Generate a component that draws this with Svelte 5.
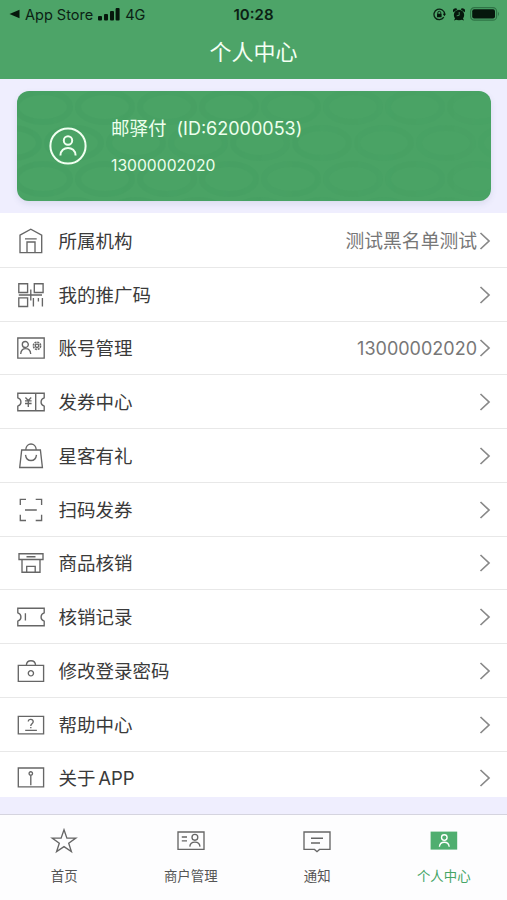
<script>
	const user = {
		name: '邮驿付',
		id: '62000053',
		phone: '13000002020'
	}

	const menu = [
		{ icon: 'house', label: '所属机构', value: '测试黑名单测试' },
		{ icon: 'qrcode', label: '我的推广码' },
		{ icon: 'account', label: '账号管理', value: '13000002020', number: true },
		{ icon: 'coupon', label: '发券中心' },
		{ icon: 'bag', label: '星客有礼' },
		{ icon: 'scan', label: '扫码发券' },
		{ icon: 'shop', label: '商品核销' },
		{ icon: 'ticket', label: '核销记录' },
		{ icon: 'lock', label: '修改登录密码' },
		{ icon: 'help', label: '帮助中心' },
		{ icon: 'about', label: '关于 APP' }
	]

	const icons = {
		house: 'M3 8.2L13.8 2.2L24.7 8.2V25.6H3ZM8 11.8H19.7M10 25.6V15H18V25.6',
		qrcode: 'M1.8 2.7H10.6V11.5H1.8ZM17.3 2.7H26.1V11.5H17.3ZM1.8 16.8H10.6V25.5H1.8ZM1.8 14H25M13.8 8.5V19.5M16.4 17V25.5M21.4 17V20.5M25.4 17V25.5',
		account: 'M.8 4H27.2V24.1H.8ZM3.7 20C4.2 12.9 13.2 12.9 13.7 20M11.3 10.5A3 3 0 1 1 5.3 10.5A3 3 0 1 1 11.3 10.5',
		coupon: 'M.8 5.2H27.2V9.8C23 11.2 23 16.8 27.2 18.2V22.7H.8V18.2C5 16.8 5 11.2 .8 9.8ZM18.7 5.2V22.7M8.4 9.5L11.3 12.5L14.2 9.5M8 12.8H14.6M8 15.5H14.6M11.3 12.5V19',
		bag: 'M4.7 8H23.4L25.4 25.5H2.7ZM8.7 8C9.2 0 18.8 0 19.3 8M8.5 12.8C9.5 20.4 18.5 20.4 19.5 12.8',
		scan: 'M9 3.3H3.3V9M18.7 3.3H24.6V9M24.6 18.7V24.5H18.7M9 24.5H3.3V18.7M8 14H19.8',
		shop: 'M2 4.7H26V10.5H2ZM5 10.5V23.2H23V10.5M9.7 23.2V17.3H18.2V23.2M9.5 7.7H18.5',
		ticket: 'M.8 5.2H27.2V9.8C23 11.2 23 16.8 27.2 18.2V22.7H.8V18.2C5 16.8 5 11.2 .8 9.8ZM8.4 10.3V17.5',
		lock: 'M1.3 8.4H26.6V24.3H1.3ZM9.3 8.4C9.7 2.2 18.2 2.2 18.6 8.4M16.5 16.3A2.6 2.6 0 1 1 11.3 16.3A2.6 2.6 0 1 1 16.5 16.3',
		help: 'M1.3 5.4H26.6V22.9H1.3ZM11.3 10.4C11.3 7.4 16.4 7.7 16.2 10.8C16 12.9 13.8 12.8 13.8 15M13.8 16V17.2M8.2 19.4H19.9',
		about: 'M1.3 4H26.6V22.8H1.3ZM15.5 9.5A1.7 1.7 0 1 1 12.1 9.5A1.7 1.7 0 1 1 15.5 9.5M13.8 11.3V21.3'
	}

	const tabs = [
		{ icon: 'star', label: '首页' },
		{ icon: 'merchant', label: '商户管理' },
		{ icon: 'notice', label: '通知' },
		{ icon: 'me', label: '个人中心' }
	]

	let active = $state('me')
</script>

<main>
	<header>
		<div class="status">
			<div class="status-left">
				<svg width="11" height="10" viewBox="0 0 11 10"><path d="M10.5 .8V9.2L.5 5Z" /></svg>
				<span class="store">App Store</span>
				<svg width="22" height="14" viewBox="0 0 22 14">
					<rect x="0" y="9" width="4" height="4.5" rx="1" />
					<rect x="6" y="7" width="4" height="6.5" rx="1" />
					<rect x="12" y="4" width="4" height="9.5" rx="1" />
					<rect x="17.6" y="1" width="4" height="12.5" rx="1" />
				</svg>
				<span class="net">4G</span>
			</div>
			<div class="time">10:28</div>
			<div class="status-right">
				<svg width="13" height="13" viewBox="0 0 13 13">
					<path d="M10.8 9.2A5.3 5.3 0 1 1 11.6 6.3" fill="none" stroke="#0b2114" stroke-width="1.3" />
					<path d="M9.8 5.8H13L11.4 8.2Z" />
					<rect x="4" y="5.8" width="4.6" height="3.5" rx=".6" />
					<path d="M4.8 6V4.8A1.5 1.5 0 0 1 7.8 4.8V6" fill="none" stroke="#0b2114" />
				</svg>
				<svg width="12" height="13" viewBox="0 0 12 13">
					<circle cx="6" cy="7" r="5.2" />
					<path d="M.5 4.2A2.2 2.2 0 0 1 4.4 1.3ZM11.5 4.2A2.2 2.2 0 0 0 7.6 1.3ZM1 12.5L2.3 9.8L4 11.5ZM11 12.5L9.7 9.8L8 11.5Z" />
					<path d="M6.2 4V7.3L3.7 7.8" fill="none" stroke="#4da468" stroke-width=".8" />
				</svg>
				<svg class="battery" width="30" height="14" viewBox="0 0 30 14">
					<rect x=".6" y=".6" width="26" height="12.6" rx="3.8" fill="none" stroke="#2f7446" stroke-width="1.2" />
					<rect x="2.2" y="2.3" width="22.8" height="9.3" rx="2" />
					<path d="M28 4.8Q30 7 28 9.2Z" fill="#2f7446" />
				</svg>
			</div>
		</div>
		<h1>个人中心</h1>
	</header>

	<section class="card">
		<svg class="texture" width="474" height="110">
			<defs>
				<pattern id="waves" width="62" height="72" patternUnits="userSpaceOnUse" x="-5" y="-20">
					<g fill="none" stroke="#35905a" stroke-width="6">
						<ellipse cx="31" cy="36" rx="27" ry="15" />
						<ellipse cx="0" cy="0" rx="27" ry="15" />
						<ellipse cx="62" cy="0" rx="27" ry="15" />
						<ellipse cx="0" cy="72" rx="27" ry="15" />
						<ellipse cx="62" cy="72" rx="27" ry="15" />
					</g>
				</pattern>
				<linearGradient id="fade"><stop offset="0" stop-color="#fff" /><stop offset="1" stop-color="#444" /></linearGradient>
				<mask id="fade-mask"><rect width="474" height="110" fill="url(#fade)" /></mask>
			</defs>
			<rect width="474" height="110" fill="url(#waves)" mask="url(#fade-mask)" opacity=".13" />
		</svg>
		<svg class="avatar" width="38" height="38" viewBox="0 0 38 38">
			<circle cx="19" cy="19" r="17.6" />
			<circle cx="19" cy="13.5" r="4.2" />
			<path d="M11.4 28.5C11.6 18.4 26.4 18.4 26.6 28.5" />
		</svg>
		<div class="info">
			<div class="name"><span>{user.name}</span><span class="uid">(ID:{user.id})</span></div>
			<div class="phone">{user.phone}</div>
		</div>
	</section>

	<ul class="menu">
		{#each menu as item}
			<li>
				<svg class="icon" width="28" height="28" viewBox="0 0 28 28">
					<path d={icons[item.icon]} />
					{#if item.icon === 'account'}
						<circle cx="20" cy="11.8" r="3.6" stroke-width="1.6" stroke-dasharray="2 .8" />
						<circle cx="20" cy="11.8" r="1.7" />
					{/if}
				</svg>
				<span class="label">{item.label}</span>
				{#if item.value}
					<span class="value" class:number={item.number}>{item.value}</span>
				{/if}
				<svg class="arrow" width="12" height="20" viewBox="0 0 12 20"><path d="M1.5 2L10 10L1.5 18" /></svg>
			</li>
		{/each}
	</ul>

	<nav>
		{#each tabs as tab}
			<button class:active={active === tab.icon} onclick={() => (active = tab.icon)}>
				<svg width="28" height="26" viewBox="0 0 28 26">
					{#if tab.icon === 'star'}
						<path d="M14 1.8L16.9 10.1H25.8L18.7 15.3L21.4 23.6L14 18.6L6.6 23.6L9.3 15.3L2.2 10.1H11.1Z" />
					{:else if tab.icon === 'merchant'}
						<path d="M1 4H27V21.4H1ZM4.8 9H10M4.8 12.8H10M12.8 18.6C13.4 12.6 22.4 12.6 23 18.6" />
						<circle cx="17.9" cy="9.3" r="2.9" />
					{:else if tab.icon === 'notice'}
						<path d="M1 4H27V21.4H16.5L14 23.7L11.5 21.4H1ZM8 10.2H20M8 15H17" />
					{:else}
						<rect x=".6" y="3.6" width="26.6" height="18" fill="#4fae6f" stroke="none" />
						<g stroke="#fff">
							<circle cx="14.3" cy="9.5" r="2.8" />
							<path d="M9.4 18.7C9.9 12.7 18.7 12.7 19.2 18.7" />
						</g>
					{/if}
				</svg>
				<span>{tab.label}</span>
			</button>
		{/each}
	</nav>
</main>

<style>
	:global(body) {
		background: #efeefe;
	}

	main {
		display: flex;
		flex-direction: column;
		width: 507px;
		height: 900px;
		overflow: hidden;
		background: #efeefe;
		font-family: Inter, "Noto Sans CJK SC", sans-serif;
		color: #3a3a3a;
	}

	header {
		height: 79px;
		flex: none;
		background: #4da468;
	}

	.status {
		display: grid;
		grid-template-columns: 1fr auto 1fr;
		align-items: center;
		height: 28px;
		padding: 0 7px 0 9px;
		color: #0b2114;
		font-size: 14.5px;
	}
	.status svg {
		fill: #06170c;
	}

	.status-left {
		display: flex;
		align-items: center;
	}

	.store {
		margin: 0 5px;
	}

	.net {
		margin-left: 5px;
	}

	.time {
		margin-right: 2px;
		font-size: 15px;
		font-weight: 600;
	}

	.status-right {
		display: flex;
		align-items: center;
		justify-content: flex-end;
		gap: 7px;
	}
	.status-right svg:not(.battery) {
		position: relative;
		left: 2px;
	}

	h1 {
		margin: 7px 0 0;
		font-size: 22px;
		font-weight: 400;
		line-height: 34px;
		text-align: center;
		color: #f4fff4;
	}

	.card {
		position: relative;
		display: flex;
		flex: none;
		width: 474px;
		height: 110px;
		margin: 12px 0 12px 17px;
		border-radius: 12px;
		overflow: hidden;
		background: #4aa365;
		box-shadow: 0 3px 6px rgba(70, 90, 120, .12);
		color: #edffed;
	}

	.texture {
		position: absolute;
		top: 0;
		left: 0;
	}

	.avatar {
		position: relative;
		margin: 36px 0 0 32px;
		fill: none;
		stroke: #f0fff0;
		stroke-width: 2;
	}

	.info {
		position: relative;
		margin: 24px 0 0 24px;
	}

	.name {
		font-size: 18.5px;
		line-height: 26px;
	}

	.uid {
		margin-left: 10px;
		font-size: 18px;
	}

	.phone {
		margin-top: 14px;
		font-size: 15.7px;
		line-height: 20px;
	}

	.menu {
		box-sizing: border-box;
		flex: none;
		height: 584px;
		margin: 0;
		padding: 1px 0 0;
		overflow: hidden;
		list-style: none;
		background: #fff;
	}

	li {
		display: flex;
		align-items: center;
		box-sizing: border-box;
		height: 53.75px;
		padding: 0 16px 0 17px;
		border-bottom: 1px solid #e8e8e8;
	}

	.icon {
		margin-top: 1px;
		fill: none;
		stroke: #666;
		stroke-width: 1.35;
	}

	.label {
		flex-grow: 1;
		margin: -1px 0 0 13.5px;
		font-size: 18.5px;
		word-spacing: -2.5px;
	}

	.value {
		margin: -1px 2px 0 0;
		font-size: 18.8px;
		color: #777;
	}
	.number {
		margin-top: 1px;
		font-size: 18px;
	}

	.arrow {
		margin-top: 1px;
		fill: none;
		stroke: #888;
		stroke-width: 1.7;
	}

	nav {
		display: grid;
		grid-template-columns: repeat(4, 1fr);
		flex-grow: 1;
		margin-top: 17px;
		padding-left: 1px;
		border-top: 1px solid #d5d4df;
		background: #fdfdfe;
	}

	button {
		display: flex;
		flex-direction: column;
		align-items: center;
		padding: 12.5px 0 0;
		border: none;
		background: none;
		font-family: inherit;
		font-size: 13.4px;
		line-height: 20px;
		color: #555;
	}
	button svg {
		fill: none;
		stroke: #666;
		stroke-width: 1.35;
	}
	button span {
		margin-top: 12px;
	}

	.active {
		color: #45a566;
	}
</style>
